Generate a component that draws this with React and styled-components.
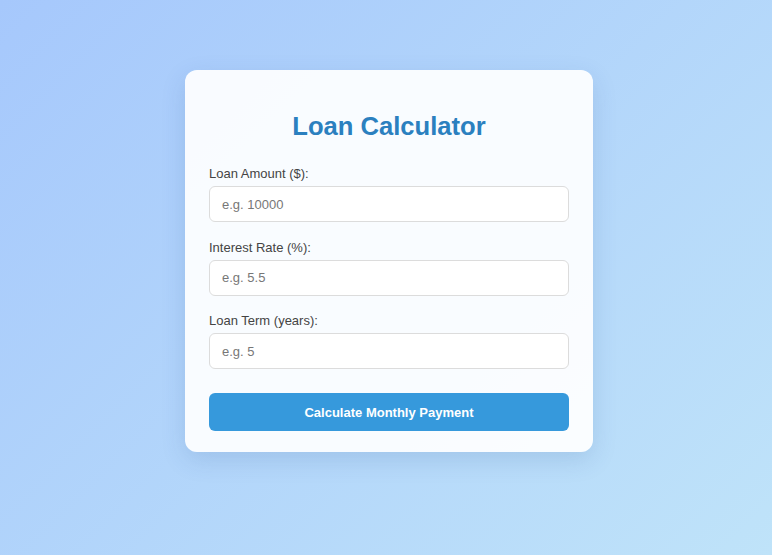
import React, { useState } from "react";
import styled, { createGlobalStyle } from "styled-components";

const GlobalStyle = createGlobalStyle`
  * {
    box-sizing: border-box;
  }
  html, body {
    margin: 0;
    padding: 0;
    min-height: 100%;
  }
  body {
    font-family: "Liberation Sans", Arial, sans-serif;
    background: linear-gradient(135deg, #a6c8fc 0%, #bfe3f9 100%);
    min-height: 100vh;
  }
`;

const Page = styled.div`
  min-height: 100vh;
  display: flex;
  justify-content: center;
  align-items: flex-start;
  padding: 70px 0 0 6px;
`;

const Card = styled.div`
  width: 408px;
  padding: 24px 24px 21px;
  background: rgba(255, 255, 255, 0.92);
  border-radius: 12px;
  box-shadow: 0 8px 24px rgba(40, 80, 140, 0.15);
`;

const Title = styled.h2`
  margin: 18px 0 25px;
  text-align: center;
  font-size: 25.6px;
  font-weight: bold;
  color: #2b80bf;
`;

const Field = styled.div`
  margin-bottom: 17.5px;
`;

const Label = styled.label`
  display: block;
  margin-bottom: 5px;
  font-size: 13px;
  line-height: 15px;
  color: #444;
`;

const Input = styled.input`
  display: block;
  width: 100%;
  height: 36px;
  padding: 0 12px;
  border: 1px solid #dcdcdc;
  border-radius: 6px;
  background: #fff;
  font-family: inherit;
  font-size: 13px;
  color: #333;
  outline: none;

  &::placeholder {
    color: #777;
  }
`;

const Button = styled.button`
  display: block;
  width: 100%;
  height: 38px;
  margin-top: 24px;
  border: none;
  border-radius: 6px;
  background: #3699dc;
  color: #fff;
  font-family: inherit;
  font-size: 13px;
  font-weight: bold;
  cursor: pointer;
`;

const Result = styled.p`
  margin: 16px 0 0;
  text-align: center;
  font-size: 15px;
  color: #2b80bf;
  font-weight: bold;
`;

const fields = [
  { key: "amount", label: "Loan Amount ($):", placeholder: "e.g. 10000" },
  { key: "rate", label: "Interest Rate (%):", placeholder: "e.g. 5.5" },
  { key: "term", label: "Loan Term (years):", placeholder: "e.g. 5" },
];

const App = () => {
  const [values, setValues] = useState({ amount: "", rate: "", term: "" });
  const [payment, setPayment] = useState(null);

  const calculate = () => {
    const p = parseFloat(values.amount);
    const r = parseFloat(values.rate) / 100 / 12;
    const n = parseFloat(values.term) * 12;
    if (!p || !n || isNaN(r)) return;
    const monthly = r === 0 ? p / n : (p * r) / (1 - Math.pow(1 + r, -n));
    setPayment(monthly.toFixed(2));
  };

  return (
    <>
      <GlobalStyle />
      <Page>
        <Card>
          <Title>Loan Calculator</Title>
          {fields.map((f) => (
            <Field key={f.key}>
              <Label htmlFor={f.key}>{f.label}</Label>
              <Input
                id={f.key}
                type="number"
                placeholder={f.placeholder}
                value={values[f.key]}
                onChange={(e) => setValues({ ...values, [f.key]: e.target.value })}
              />
            </Field>
          ))}
          <Button onClick={calculate}>Calculate Monthly Payment</Button>
          {payment && <Result>Monthly Payment: ${payment}</Result>}
        </Card>
      </Page>
    </>
  );
};

export default App;
